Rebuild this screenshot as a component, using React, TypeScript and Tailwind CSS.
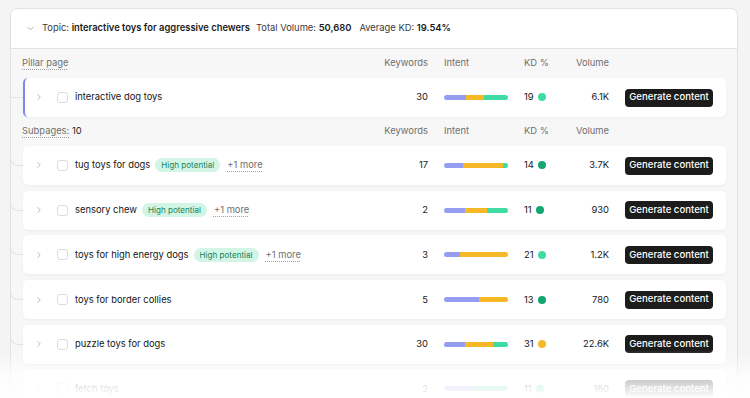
import { ChevronDown, ChevronRight } from "lucide-react";

type Seg = [string, number];

type Row = {
  name: string;
  badge?: boolean;
  keywords: number;
  intent: Seg[];
  kd: number;
  kdColor: string;
  volume: string;
};

const purple = "#949df0";
const amber = "#f6b826";
const teal = "#3edca2";
const green = "#12a673";

const pillar: Row = {
  name: "interactive dog toys",
  keywords: 30,
  intent: [
    [purple, 22],
    [amber, 18],
    [teal, 24],
  ],
  kd: 19,
  kdColor: teal,
  volume: "6.1K",
};

const subpages: Row[] = [
  { name: "tug toys for dogs", badge: true, keywords: 17, intent: [[purple, 19], [amber, 40], [teal, 5]], kd: 14, kdColor: green, volume: "3.7K" },
  { name: "sensory chew", badge: true, keywords: 2, intent: [[purple, 21], [amber, 22], [teal, 21]], kd: 11, kdColor: green, volume: "930" },
  { name: "toys for high energy dogs", badge: true, keywords: 3, intent: [[purple, 16], [amber, 48]], kd: 21, kdColor: teal, volume: "1.2K" },
  { name: "toys for border collies", keywords: 5, intent: [[purple, 35], [amber, 29]], kd: 13, kdColor: green, volume: "780" },
  { name: "puzzle toys for dogs", keywords: 30, intent: [[purple, 21], [amber, 28], [teal, 15]], kd: 31, kdColor: amber, volume: "22.6K" },
  { name: "fetch toys", keywords: 2, intent: [[purple, 32], [teal, 32]], kd: 11, kdColor: teal, volume: "160" },
];

function ColumnLabels({ children }: { children: React.ReactNode }) {
  return (
    <div className="flex h-[16px] items-center pr-[13px] text-[9.4px] text-[#6f6f6f]">
      <div className="flex-1">{children}</div>
      <div className="w-[60px] text-right">Keywords</div>
      <div className="ml-[16px] w-[64px]">Intent</div>
      <div className="ml-[16px] w-[45px]">KD %</div>
      <div className="w-[40px] text-right">Volume</div>
      <div className="ml-[16px] w-[88px]" />
    </div>
  );
}

function IntentBar({ segs }: { segs: Seg[] }) {
  return (
    <div className="flex h-[5px] w-[64px] overflow-hidden rounded-full">
      {segs.map(([color, w], i) => (
        <div key={i} className="h-full" style={{ width: w, background: color }} />
      ))}
    </div>
  );
}

function RowCard({ row, isPillar }: { row: Row; isPillar?: boolean }) {
  return (
    <div
      className={`flex h-[39px] flex-1 items-center rounded-[5px] bg-white pr-[13px] text-[9.4px] text-[#161616] shadow-[0_1px_3px_rgba(0,0,0,0.05)] ${
        isPillar ? "border-l-2 border-[#7f88ec]" : ""
      }`}
    >
      <div className={`flex flex-1 items-center ${isPillar ? "pl-[9px]" : "pl-[11px]"}`}>
        <ChevronRight size={10} strokeWidth={1.6} className="text-[#9a9a9a]" />
        <div className="ml-[13px] h-[11px] w-[11px] rounded-[3px] border border-[#dcdcdc] bg-white" />
        <span className="ml-[7px]">{row.name}</span>
        {row.badge && (
          <>
            <span className="ml-[5px] flex h-[14px] items-center rounded-full bg-[#d3f5e6] px-[6px] text-[8.1px] text-[#17845a]">
              High potential
            </span>
            <span className="ml-[7px] text-[#6f6f6f] underline decoration-[#a0a0a0] decoration-dotted underline-offset-[3px]">
              +1 more
            </span>
          </>
        )}
      </div>
      <div className="w-[60px] text-right">{row.keywords}</div>
      <div className="ml-[16px]">
        <IntentBar segs={row.intent} />
      </div>
      <div className="ml-[16px] flex w-[45px] items-center gap-[4px]">
        <span>{row.kd}</span>
        <span className="h-[8px] w-[8px] rounded-full" style={{ background: row.kdColor }} />
      </div>
      <div className="w-[40px] text-right">{row.volume}</div>
      <button className="ml-[16px] flex h-[18px] w-[88px] items-center justify-center rounded-[4px] bg-[#1c1c1c] text-[9.6px] font-medium text-white">
        Generate content
      </button>
    </div>
  );
}

function Branch({ straight }: { straight?: boolean }) {
  return straight ? (
    <div className="h-px w-[13px] self-center bg-[#e2e2e2]" />
  ) : (
    <div className="mb-[19px] h-[12px] w-[13px] self-end rounded-bl-[8px] border-b border-l border-[#e2e2e2]" />
  );
}

export default function App() {
  return (
    <div
      className="relative h-[398px] w-[750px] overflow-hidden bg-[#f4f4f4] pl-[10px] pr-[12px] pt-[8px]"
      style={{ fontFamily: "Inter, 'Noto Sans', sans-serif" }}
    >
      <div className="rounded-t-[7px] border border-[#e2e2e2] bg-[#f7f7f7]">
        <div className="flex h-[40px] items-center gap-[6px] rounded-t-[7px] border-b border-[#e2e2e2] bg-white pl-[14px] text-[9.4px] text-[#3a3a3a]">
          <ChevronDown size={11} strokeWidth={1.6} className="text-[#9a9a9a]" />
          <span>
            Topic: <b className="font-semibold text-[#1a1a1a]">interactive toys for aggressive chewers</b>
          </span>
          <span>
            Total Volume: <b className="font-semibold text-[#1a1a1a]">50,680</b>
          </span>
          <span className="ml-[2px]">
            Average KD: <b className="font-semibold text-[#1a1a1a]">19.54%</b>
          </span>
        </div>

        <div className="pb-[20px] pl-[12px] pr-[11px] pt-[6px]">
          <ColumnLabels>
            <span className="-ml-px underline decoration-[#a0a0a0] decoration-dotted underline-offset-[3px]">Pillar page</span>
          </ColumnLabels>
          <div className="-ml-[13px] mt-[7px] flex">
            <Branch straight />
            <RowCard row={pillar} isPillar />
          </div>

          <div className="mt-[6px]">
            <ColumnLabels>
              <span className="-ml-px">
                <span className="underline decoration-[#a0a0a0] decoration-dotted underline-offset-[3px]">Subpages:</span>{" "}
                <span className="text-[#1f1f1f]">10</span>
              </span>
            </ColumnLabels>
          </div>

          <div className="mt-[7px] flex flex-col gap-[5.7px]">
            {subpages.map((row) => (
              <div key={row.name} className="-ml-[13px] flex">
                <Branch />
                <RowCard row={row} />
              </div>
            ))}
          </div>
        </div>
      </div>

      <div className="pointer-events-none absolute bottom-0 left-0 h-[48px] w-full bg-gradient-to-b from-white/0 via-white/70 to-white" />
    </div>
  );
}
